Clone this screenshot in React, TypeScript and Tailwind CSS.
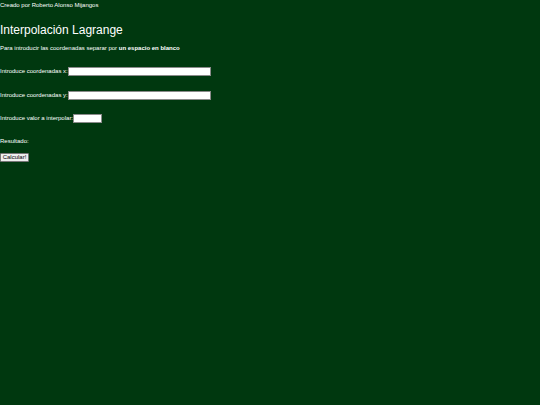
export default function App() {
  return (
    <div
      className="min-h-screen w-full bg-[#00380f] text-white"
      style={{ fontFamily: '"Liberation Sans", Arial, sans-serif' }}
    >
      <div className="h-[10px] text-[6px] leading-[10px]">Creado por Roberto Alonso Mijangos</div>

      <h1 className="mt-[14px] text-[12px] leading-[12px] font-normal">Interpolación Lagrange</h1>

      <p className="mt-[9px] text-[6px] leading-[7px]">
        Para introducir las coordenadas separar por <b>un espacio en blanco</b>
      </p>

      <div className="mt-[15px] flex h-[9px] items-center text-[6px] leading-[7px]">
        <label>Introduce coordenadas x:</label>
        <input type="text" className="h-[9px] w-[143px] border border-[#8a8a8a] bg-white text-[6px] text-black outline-none" />
      </div>

      <div className="mt-[15px] flex h-[9px] items-center text-[6px] leading-[7px]">
        <label>Introduce coordenadas y:</label>
        <input type="text" className="h-[9px] w-[143px] border border-[#8a8a8a] bg-white text-[6px] text-black outline-none" />
      </div>

      <div className="mt-[14px] flex h-[9px] items-center text-[6px] leading-[7px]">
        <label>Introduce valor a interpolar:</label>
        <input type="text" className="h-[9px] w-[29px] border border-[#8a8a8a] bg-white text-[6px] text-black outline-none" />
      </div>

      <p className="mt-[15px] text-[6px] leading-[7px]">Resultado:</p>

      <button
        type="button"
        className="mt-[8px] flex h-[9px] w-[29px] items-center justify-center rounded-[1px] border border-[#767676] bg-[#efefef] text-[6px] leading-[7px] text-black"
      >
        Calcular!
      </button>
    </div>
  );
}
